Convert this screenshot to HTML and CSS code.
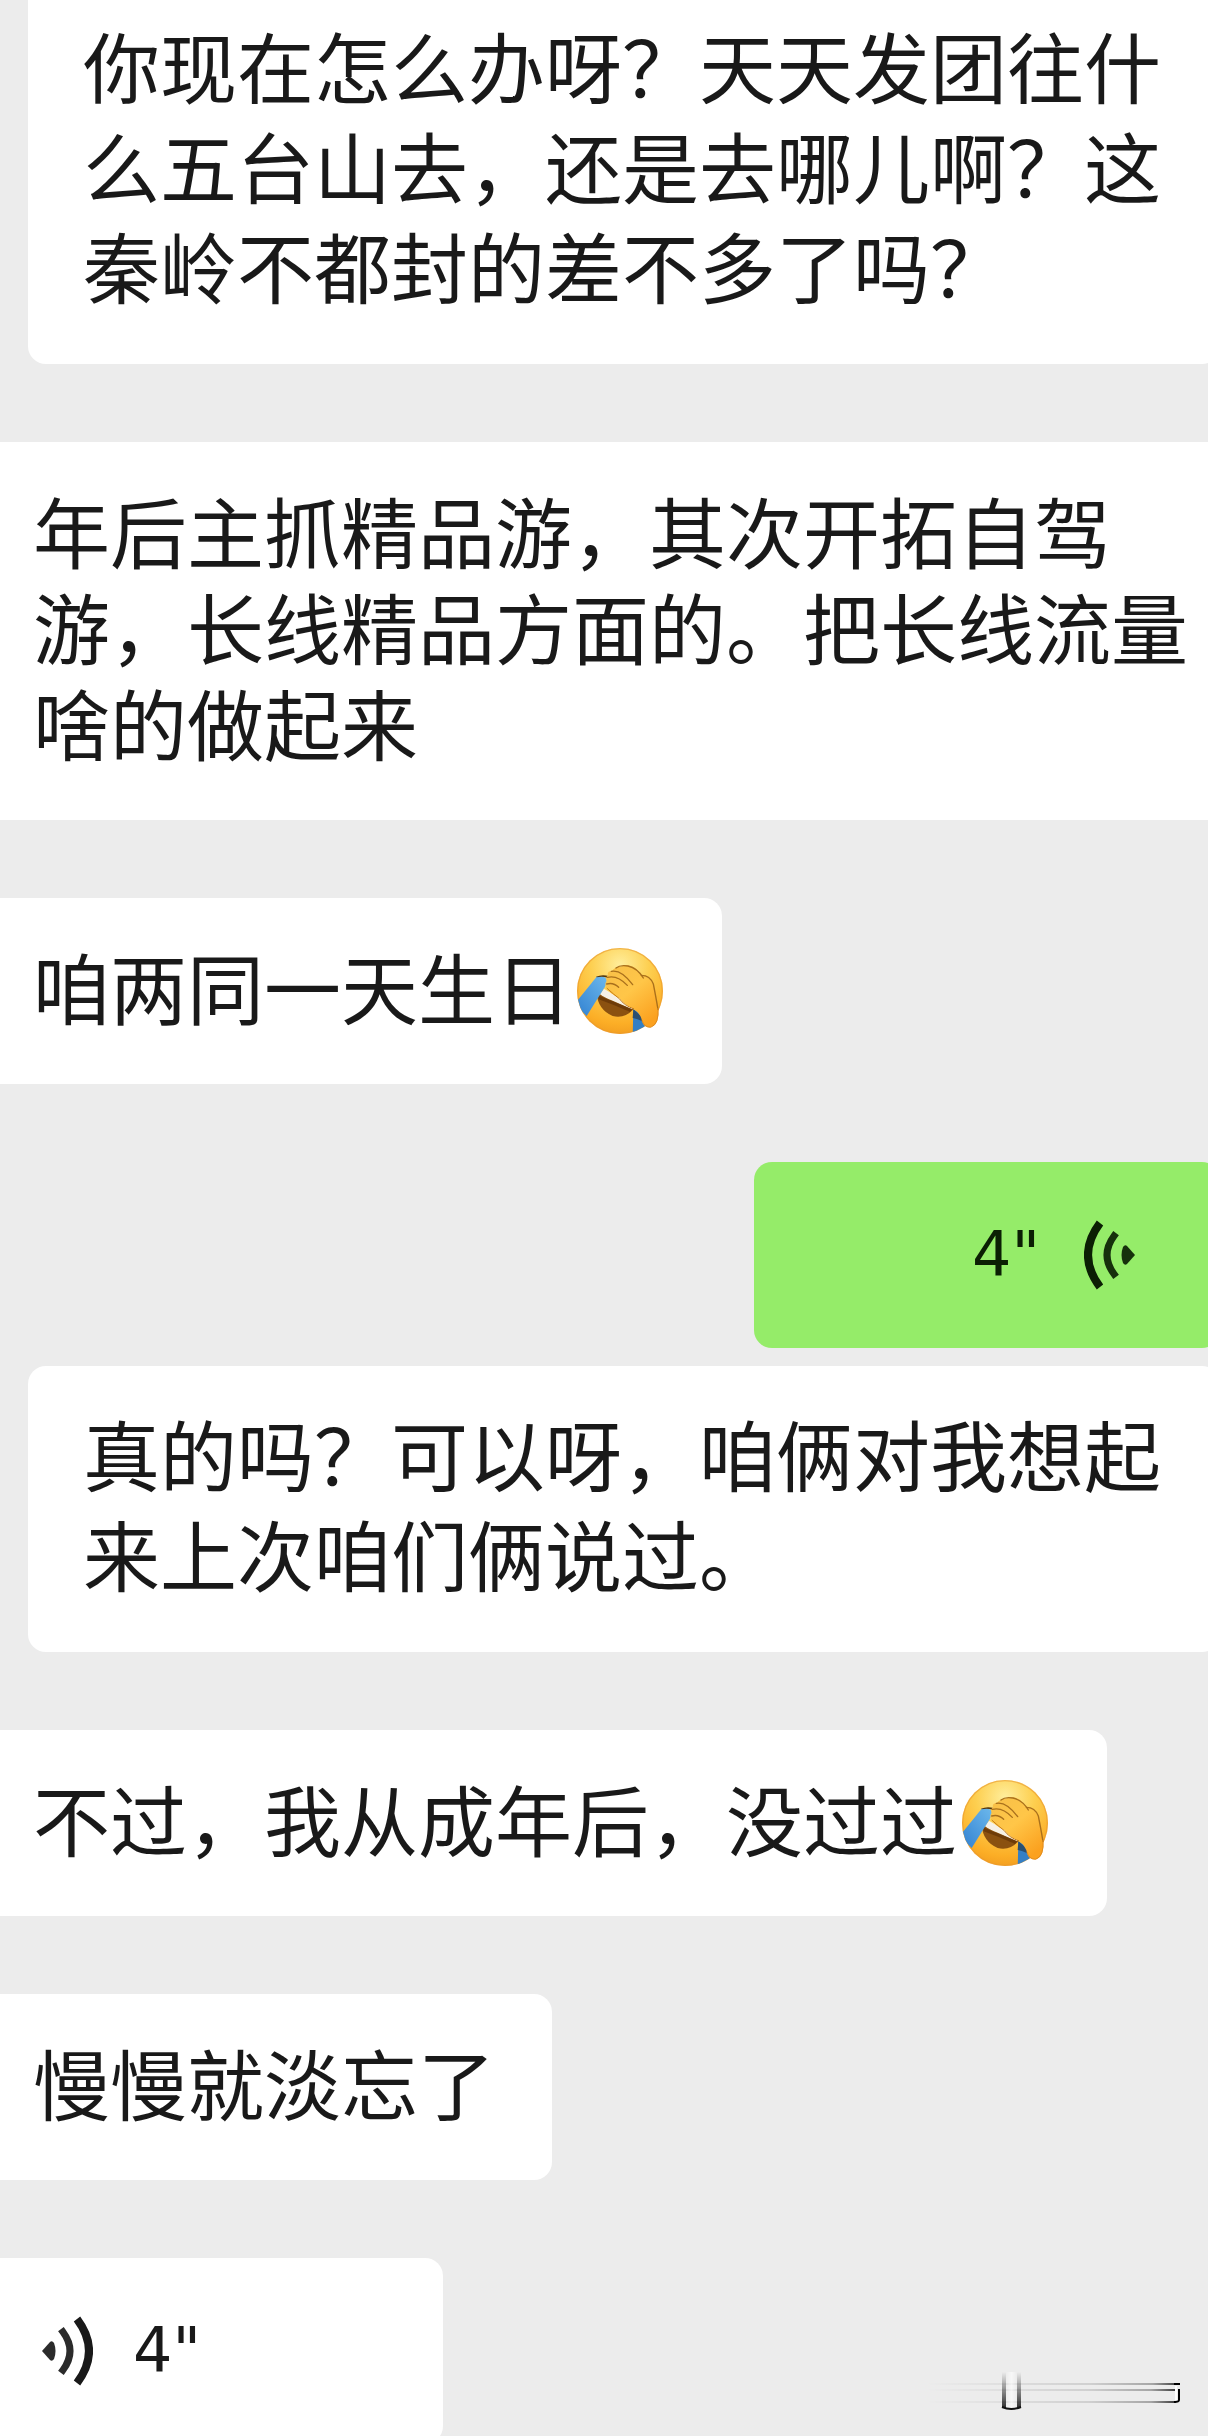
FILE: index.html
```html
<!DOCTYPE html>
<html lang="zh-CN">
<head>
<meta charset="utf-8">
<meta name="viewport" content="width=device-width, initial-scale=1">
<title>聊天</title>
<link rel="stylesheet" href="styles.css">
</head>
<body>
<svg class="defs" aria-hidden="true">
  <defs>
    <radialGradient id="face" cx="0.5" cy="0.2" r="0.85">
      <stop offset="0" stop-color="#ffee9c"/>
      <stop offset="0.4" stop-color="#fdcf50"/>
      <stop offset="0.8" stop-color="#fcae26"/>
      <stop offset="1" stop-color="#f09a1e"/>
    </radialGradient>
    <linearGradient id="hand" x1="0" y1="0" x2="0.7" y2="1">
      <stop offset="0" stop-color="#f7bf48"/>
      <stop offset="0.5" stop-color="#ffc648"/>
      <stop offset="1" stop-color="#fba11f"/>
    </linearGradient>
    <linearGradient id="tear" x1="1" y1="0" x2="0" y2="1">
      <stop offset="0" stop-color="#6cb8ec"/>
      <stop offset="1" stop-color="#2f7fd0"/>
    </linearGradient>
    <clipPath id="disc"><circle cx="176" cy="181" r="129"/></clipPath>
    <symbol id="facepalm" viewBox="44 49 264 264">
      <circle cx="176" cy="181" r="129" fill="url(#face)"/>
      <circle cx="176" cy="181" r="127" fill="none" stroke="#e9992f" stroke-width="4" opacity="0.6"/>
      <path d="M106 188Q110 238 154 256Q190 264 214 238L222 226Z" fill="#8b5110"/>
      <path d="M128 174L116 190Q126 200 154 210L212 236L218 228Z" fill="#f6f0e6"/>
      <path d="M110 192Q122 200 150 210L212 236L206 244Q180 232 112 206Z" fill="#6e3b08"/>
      <g clip-path="url(#disc)">
        <path d="M106 138Q124 132 136 144Q138 156 130 170L76 256L40 220Z" fill="url(#tear)"/>
        <path d="M216 236L256 262L268 320L214 320Z" fill="#357fc4"/>
        <path d="M216 236L246 262L248 274Q226 264 214 262Z" fill="#2b4f70"/>
      </g>
      <path d="M104 138Q122 130 142 136L140 142Q124 136 106 140Z" fill="#4f3510"/>
      <path d="M140 134Q136 122 152 120Q162 108 178 108Q200 98 222 112L240 132Q266 132 278 158Q284 190 290 224Q296 286 266 290Q246 290 242 270Q238 250 218 234Q190 224 174 202Q142 188 136 170Q128 160 136 152Q132 140 140 134Z" fill="url(#hand)"/>
      <g fill="none" stroke="#a9701c" stroke-width="4" stroke-linecap="round">
        <path d="M164 112Q176 102 200 106Q228 112 246 142"/>
        <path d="M150 122Q180 116 214 162"/>
        <path d="M138 140Q168 132 198 164"/>
        <path d="M136 160Q156 154 172 170"/>
        <path d="M240 134Q266 134 276 160Q282 190 290 236"/>
      </g>
      <path d="M136 172Q158 192 174 204Q188 224 218 235" fill="none" stroke="#c77c16" stroke-width="3"/>
      <path d="M290 232Q294 280 268 290Q248 290 242 268" fill="none" stroke="#e18b1d" stroke-width="3"/>
    </symbol>
    <symbol id="waves" viewBox="0 0 52 72">
      <path d="M1 36L9 27Q11 25 13 28Q16 36 13 44Q11 47 9 45Z" fill="currentColor" opacity="0.92"/>
      <path d="M22 17Q36 36 22 55" fill="none" stroke="currentColor" stroke-width="7" stroke-linecap="square" opacity="0.92"/>
      <path d="M36 4Q60 36 36 68" fill="none" stroke="currentColor" stroke-width="8"/>
    </symbol>
    <linearGradient id="ray"><stop offset="0" stop-color="#000" stop-opacity="0"/><stop offset="0.65" stop-color="#000" stop-opacity="0.12"/><stop offset="0.9" stop-color="#000" stop-opacity="0.3"/><stop offset="1" stop-color="#000" stop-opacity="0.75"/></linearGradient>
    <linearGradient id="post" x1="0" y1="0" x2="0" y2="1"><stop offset="0" stop-color="#000" stop-opacity="0"/><stop offset="1" stop-color="#000" stop-opacity="0.8"/></linearGradient>
    <linearGradient id="gleam"><stop offset="0" stop-color="#fff" stop-opacity="0"/><stop offset="0.5" stop-color="#fff"/><stop offset="1" stop-color="#fff" stop-opacity="0"/></linearGradient>
  </defs>
</svg>
<main class="chat">
  <p class="bubble transcript first">你现在怎么办呀？天天发团往什么五台山去，还是去哪儿啊？这秦岭不都封的差不多了吗？</p>
  <p class="bubble wide">年后主抓精品游，其次开拓自驾游，长线精品方面的。把长线流量啥的做起来</p>
  <p class="bubble">咱两同一天生日<svg class="emoji" role="img" aria-label="捂脸"><use href="#facepalm"/></svg></p>
  <button type="button" class="bubble voice sent">4"<svg class="waves flip" aria-hidden="true"><use href="#waves"/></svg></button>
  <p class="bubble transcript">真的吗？可以呀，咱俩对我想起来上次咱们俩说过。</p>
  <p class="bubble">不过，我从成年后，没过过<svg class="emoji" role="img" aria-label="捂脸"><use href="#facepalm"/></svg></p>
  <p class="bubble">慢慢就淡忘了</p>
  <button type="button" class="bubble voice"><svg class="waves" aria-hidden="true"><use href="#waves"/></svg>4"</button>
  <svg class="mark" viewBox="0 0 260 40" aria-hidden="true">
    <rect x="4" y="11" width="252" height="2" fill="url(#ray)"/>
    <rect x="4" y="17" width="250" height="2" fill="url(#ray)"/>
    <rect x="4" y="29" width="250" height="2" fill="url(#ray)"/>
    <rect x="84" y="0" width="11" height="36" fill="url(#gleam)" opacity="0.6"/>
    <rect x="80" y="0" width="4" height="36" fill="url(#post)"/>
    <rect x="95" y="0" width="4" height="36" fill="url(#post)"/>
    <path d="M80 35Q89 39 99 35" fill="none" stroke="#111" stroke-width="2"/>
    <path d="M252 12H258" stroke="#000" stroke-width="2"/>
    <path d="M257 17V28Q257 30 252 30" fill="none" stroke="#000" stroke-width="2"/>
    <path d="M254 14V28" stroke="#fff" stroke-width="2"/>
  </svg>
</main>
</body>
</html>
```
FILE: styles.css
```css
* {
  box-sizing: border-box;
}

body {
  margin: 0;
  background: #ececec;
}

.defs {
  position: absolute;
  width: 0;
  height: 0;
}

.chat {
  position: relative;
  display: flex;
  flex-direction: column;
  align-items: flex-start;
  gap: 78px;
  height: 100vh;
  overflow: hidden;
  font-family: "Noto Sans CJK SC", sans-serif;
  font-size: 77px;
  line-height: 96px;
  color: #191919;
}

.bubble {
  display: flex;
  flex-shrink: 0;
  align-items: center;
  margin: 0 0 0 -23px;
  padding: 40px 57px 50px 56px;
  border: 0;
  border-radius: 18px;
  background: #fff;
}

.wide {
  margin-right: -38px;
}

.transcript {
  align-self: stretch;
  margin: -60px -12px 0 28px;
  padding: 37px 56px 49px 55px;
  line-height: 100px;
}

.first {
  margin-top: -22px;
}

.emoji {
  width: 88px;
  height: 88px;
  margin: 5px 1px -5px 4px;
}

.voice {
  width: 466px;
  gap: 40px;
  padding: 45px 64px;
  font-family: "DejaVu Sans", sans-serif;
  font-size: 62px;
  line-height: 96px;
  color: #191919;
  cursor: pointer;
}

.sent {
  align-self: flex-end;
  justify-content: flex-end;
  gap: 44px;
  margin: 0 -12px 0 0;
  padding-right: 84px;
  background: #95ec69;
  color: #0b1f04;
}

.waves {
  width: 52px;
  height: 72px;
}

.flip {
  transform: scaleX(-1);
}

.mark {
  position: absolute;
  right: 26px;
  bottom: 24px;
  width: 260px;
  height: 40px;
}
```
